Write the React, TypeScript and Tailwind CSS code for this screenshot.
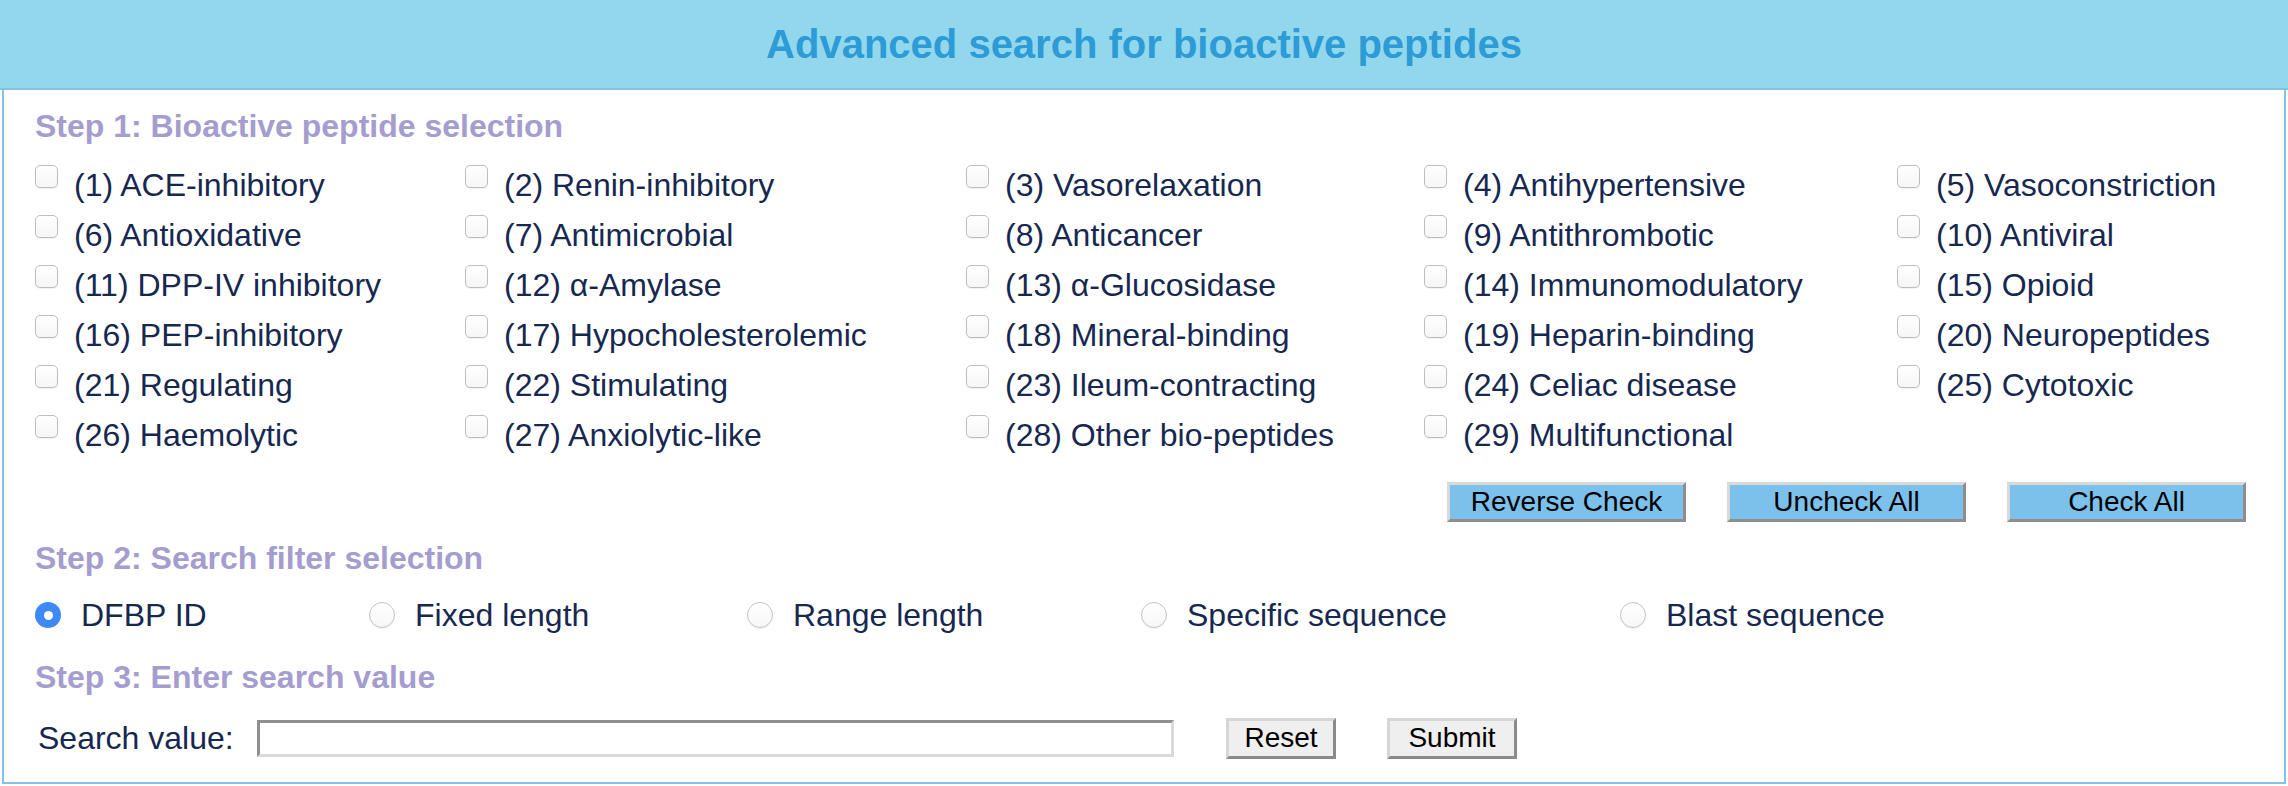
const rows: string[][] = [
  ['(1) ACE-inhibitory', '(2) Renin-inhibitory', '(3) Vasorelaxation', '(4) Antihypertensive', '(5) Vasoconstriction'],
  ['(6) Antioxidative', '(7) Antimicrobial', '(8) Anticancer', '(9) Antithrombotic', '(10) Antiviral'],
  ['(11) DPP-IV inhibitory', '(12) α-Amylase', '(13) α-Glucosidase', '(14) Immunomodulatory', '(15) Opioid'],
  ['(16) PEP-inhibitory', '(17) Hypocholesterolemic', '(18) Mineral-binding', '(19) Heparin-binding', '(20) Neuropeptides'],
  ['(21) Regulating', '(22) Stimulating', '(23) Ileum-contracting', '(24) Celiac disease', '(25) Cytotoxic'],
  ['(26) Haemolytic', '(27) Anxiolytic-like', '(28) Other bio-peptides', '(29) Multifunctional'],
];

const filters = ['DFBP ID', 'Fixed length', 'Range length', 'Specific sequence', 'Blast sequence'];

function Checkbox() {
  return (
    <span className="mt-[5px] mr-[16px] h-[23px] w-[23px] shrink-0 rounded-[5px] border border-[#bdbdbd] bg-gradient-to-b from-white to-[#f6f6f6] shadow-[0_1px_1px_rgba(0,0,0,0.06)]" />
  );
}

function Radio({ checked }: { checked?: boolean }) {
  if (checked) {
    return (
      <span className="mr-[20px] flex h-[26px] w-[26px] shrink-0 items-center justify-center rounded-full bg-[#3d8af7]">
        <span className="h-[9px] w-[9px] rounded-full bg-white" />
      </span>
    );
  }
  return (
    <span className="mr-[20px] h-[26px] w-[26px] shrink-0 rounded-full border border-[#c4c4c4] bg-gradient-to-b from-white to-[#f7f7f7] shadow-[0_1px_1px_rgba(0,0,0,0.06)]" />
  );
}

function StepTitle({ children }: { children: React.ReactNode }) {
  return <div className="h-[50px] text-[32px] font-bold leading-[50px] text-[#a59dcf]">{children}</div>;
}

function BlueButton({ label }: { label: string }) {
  return (
    <button className="h-[40px] w-[239px] border-[3px] border-t-[#d9d9d9] border-l-[#d9d9d9] border-b-[#8e8e8e] border-r-[#8e8e8e] bg-[#7cc0ec] text-[28px] leading-none text-black">
      {label}
    </button>
  );
}

function GrayButton({ label, width }: { label: string; width: string }) {
  return (
    <button
      className={`${width} h-[41px] border-[3px] border-t-[#d6d6d6] border-l-[#d6d6d6] border-b-[#8a8a8a] border-r-[#8a8a8a] bg-[#efefef] text-[28px] leading-none text-black`}
    >
      {label}
    </button>
  );
}

export default function App() {
  return (
    <div className="w-[2288px] bg-white font-['Liberation_Sans',Arial,sans-serif] text-[#172850]">
      <div className="mx-[2px] border-2 border-t-0 border-[#80c3e4]">
        <div className="-mx-[4px] flex h-[90px] items-center justify-center border-b-2 border-[#80c3e4] bg-[#93d7ed]">
          <h1 className="text-[40px] font-bold text-[#2c9bd6]">Advanced search for bioactive peptides</h1>
        </div>

        <div className="pl-[31px] pr-[38px] pt-[11px] pb-[8px]">
          <StepTitle>Step 1: Bioactive peptide selection</StepTitle>

          <div className="mt-[9px] grid grid-cols-[430px_501px_458px_473px_1fr]">
            {rows.flatMap((row, ri) =>
              row.map((label) => (
                <label key={`${ri}-${label}`} className="flex h-[50px] items-start">
                  <Checkbox />
                  <span className="text-[32px] leading-[50px]">{label}</span>
                </label>
              ))
            )}
          </div>

          <div className="mt-[22px] flex justify-end gap-[41px]">
            <BlueButton label="Reverse Check" />
            <BlueButton label="Uncheck All" />
            <BlueButton label="Check All" />
          </div>

          <div className="mt-[11px]">
            <StepTitle>Step 2: Search filter selection</StepTitle>
          </div>

          <div className="mt-[7px] grid grid-cols-[334px_378px_394px_479px_1fr]">
            {filters.map((f, i) => (
              <label key={f} className="flex h-[50px] items-center">
                <Radio checked={i === 0} />
                <span className="text-[32px] leading-[50px]">{f}</span>
              </label>
            ))}
          </div>

          <div className="mt-[12px]">
            <StepTitle>Step 3: Enter search value</StepTitle>
          </div>

          <div className="flex h-[72px] items-center">
            <span className="w-[222px] pl-[3px] text-[32px]">Search value:</span>
            <input
              type="text"
              className="h-[37px] w-[917px] border-[3px] border-t-[#8f8f8f] border-l-[#8f8f8f] border-b-[#d9d9d9] border-r-[#d9d9d9] bg-white outline-none"
            />
            <div className="ml-[52px]">
              <GrayButton label="Reset" width="w-[110px]" />
            </div>
            <div className="ml-[51px]">
              <GrayButton label="Submit" width="w-[130px]" />
            </div>
          </div>
        </div>
      </div>
    </div>
  );
}
